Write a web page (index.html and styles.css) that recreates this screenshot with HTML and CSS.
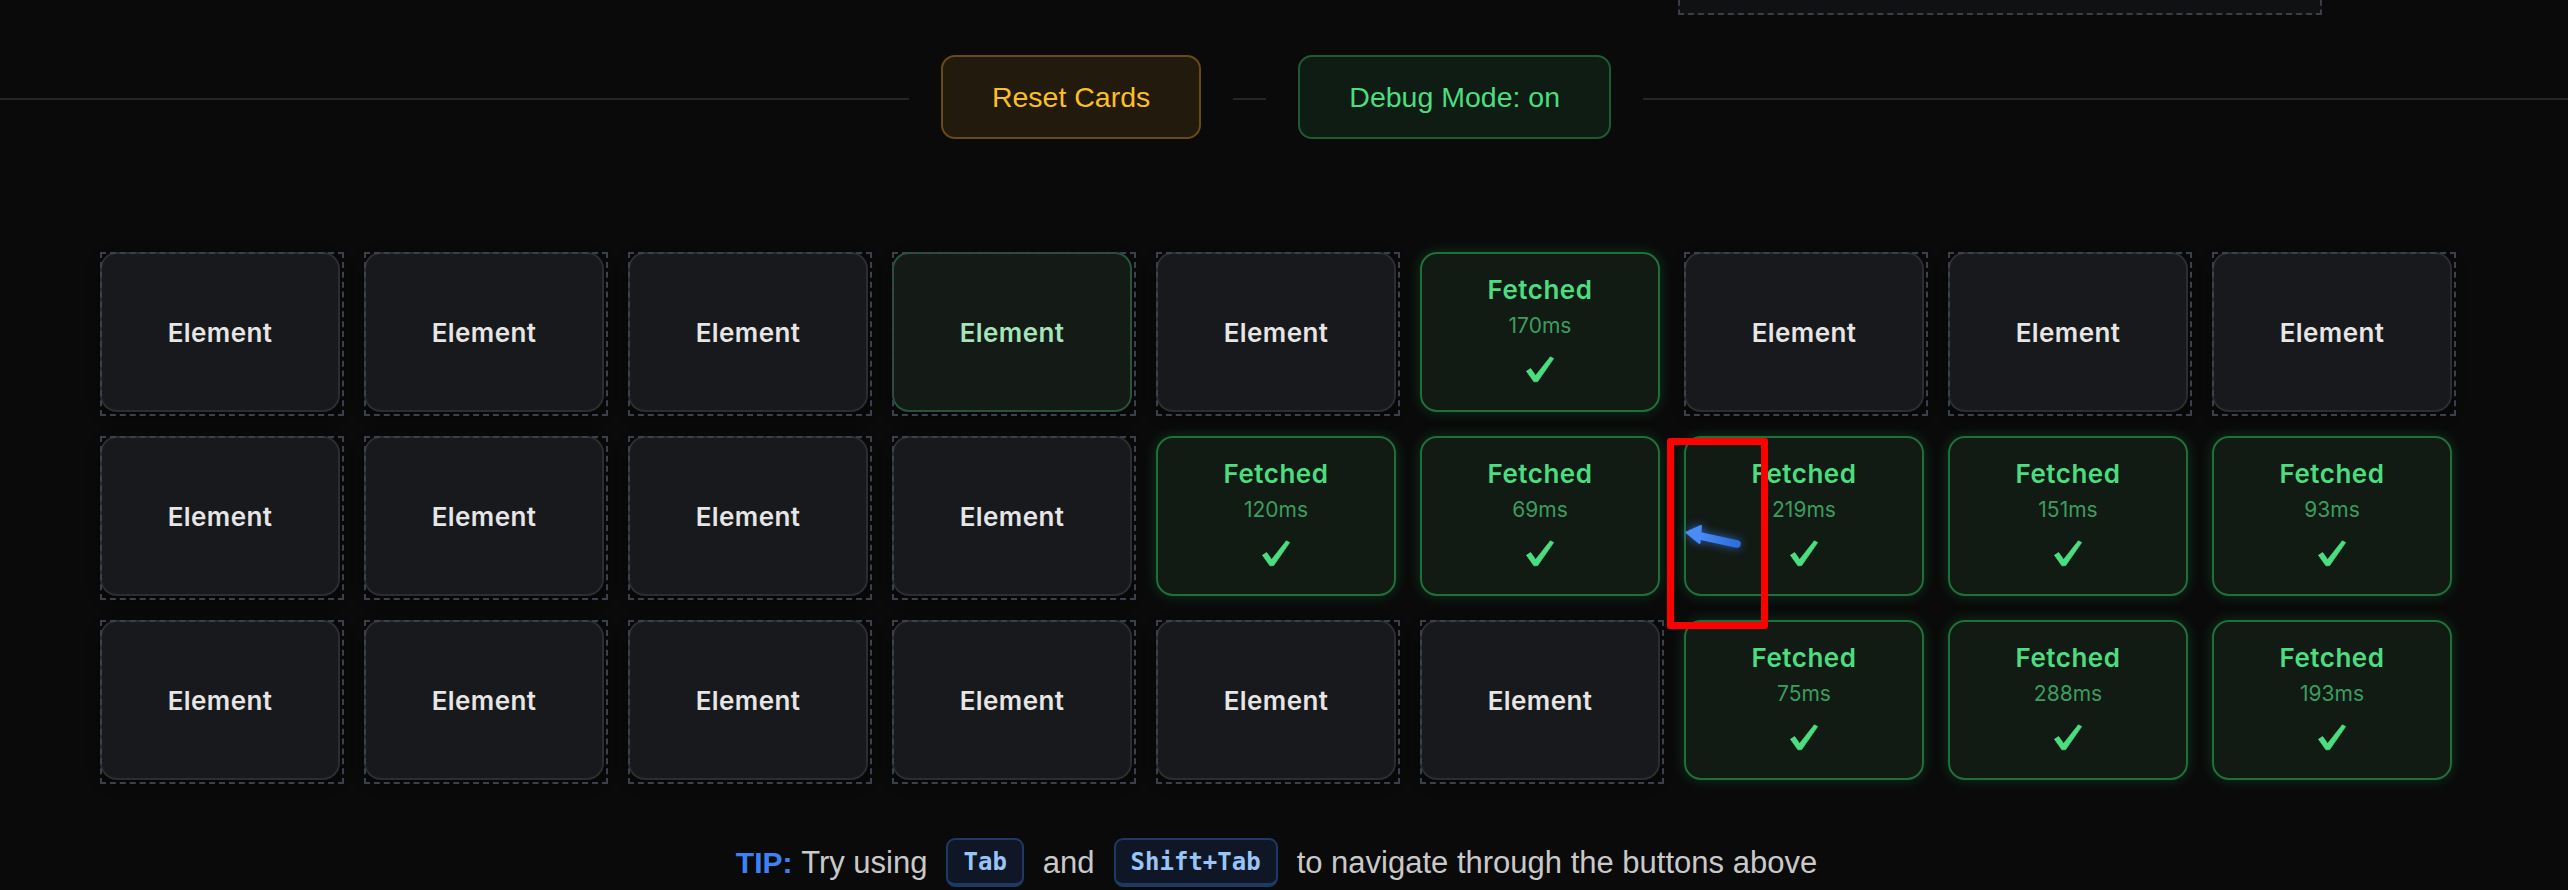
FILE: index.html
```html
<!DOCTYPE html>
<html lang="en">
<head>
<meta charset="utf-8">
<title>Cards</title>
<link rel="stylesheet" href="styles.css">
</head>
<body>
<div class="topbox"></div>

<div class="controls">
  <span class="btn-wrap"><button class="btn btn-reset">Reset Cards</button></span>
  <span class="btn-wrap"><button class="btn btn-debug">Debug Mode: on</button></span>
</div>

<div class="grid">
  <!-- row 1 -->
  <div class="cell debug"><div class="card">Element</div></div>
  <div class="cell debug"><div class="card">Element</div></div>
  <div class="cell debug"><div class="card">Element</div></div>
  <div class="cell debug"><div class="card hover">Element</div></div>
  <div class="cell debug"><div class="card">Element</div></div>
  <div class="cell"><div class="card fetched"><div class="f-title">Fetched</div><div class="f-time">170ms</div><svg class="check" viewBox="0 0 30 27"><path d="M1.5 15.2 L5.6 12.6 L10.6 19.6 L25.4 0.8 L28.6 2.6 L12.6 25.6 L9 25.8 Z"/></svg></div></div>
  <div class="cell debug"><div class="card">Element</div></div>
  <div class="cell debug"><div class="card">Element</div></div>
  <div class="cell debug"><div class="card">Element</div></div>
  <!-- row 2 -->
  <div class="cell debug"><div class="card">Element</div></div>
  <div class="cell debug"><div class="card">Element</div></div>
  <div class="cell debug"><div class="card">Element</div></div>
  <div class="cell debug"><div class="card">Element</div></div>
  <div class="cell"><div class="card fetched"><div class="f-title">Fetched</div><div class="f-time">120ms</div><svg class="check" viewBox="0 0 30 27"><path d="M1.5 15.2 L5.6 12.6 L10.6 19.6 L25.4 0.8 L28.6 2.6 L12.6 25.6 L9 25.8 Z"/></svg></div></div>
  <div class="cell"><div class="card fetched"><div class="f-title">Fetched</div><div class="f-time">69ms</div><svg class="check" viewBox="0 0 30 27"><path d="M1.5 15.2 L5.6 12.6 L10.6 19.6 L25.4 0.8 L28.6 2.6 L12.6 25.6 L9 25.8 Z"/></svg></div></div>
  <div class="cell"><div class="card fetched"><div class="f-title">Fetched</div><div class="f-time">219ms</div><svg class="check" viewBox="0 0 30 27"><path d="M1.5 15.2 L5.6 12.6 L10.6 19.6 L25.4 0.8 L28.6 2.6 L12.6 25.6 L9 25.8 Z"/></svg></div></div>
  <div class="cell"><div class="card fetched"><div class="f-title">Fetched</div><div class="f-time">151ms</div><svg class="check" viewBox="0 0 30 27"><path d="M1.5 15.2 L5.6 12.6 L10.6 19.6 L25.4 0.8 L28.6 2.6 L12.6 25.6 L9 25.8 Z"/></svg></div></div>
  <div class="cell"><div class="card fetched"><div class="f-title">Fetched</div><div class="f-time">93ms</div><svg class="check" viewBox="0 0 30 27"><path d="M1.5 15.2 L5.6 12.6 L10.6 19.6 L25.4 0.8 L28.6 2.6 L12.6 25.6 L9 25.8 Z"/></svg></div></div>
  <!-- row 3 -->
  <div class="cell debug"><div class="card">Element</div></div>
  <div class="cell debug"><div class="card">Element</div></div>
  <div class="cell debug"><div class="card">Element</div></div>
  <div class="cell debug"><div class="card">Element</div></div>
  <div class="cell debug"><div class="card">Element</div></div>
  <div class="cell debug"><div class="card">Element</div></div>
  <div class="cell"><div class="card fetched"><div class="f-title">Fetched</div><div class="f-time">75ms</div><svg class="check" viewBox="0 0 30 27"><path d="M1.5 15.2 L5.6 12.6 L10.6 19.6 L25.4 0.8 L28.6 2.6 L12.6 25.6 L9 25.8 Z"/></svg></div></div>
  <div class="cell"><div class="card fetched"><div class="f-title">Fetched</div><div class="f-time">288ms</div><svg class="check" viewBox="0 0 30 27"><path d="M1.5 15.2 L5.6 12.6 L10.6 19.6 L25.4 0.8 L28.6 2.6 L12.6 25.6 L9 25.8 Z"/></svg></div></div>
  <div class="cell"><div class="card fetched"><div class="f-title">Fetched</div><div class="f-time">193ms</div><svg class="check" viewBox="0 0 30 27"><path d="M1.5 15.2 L5.6 12.6 L10.6 19.6 L25.4 0.8 L28.6 2.6 L12.6 25.6 L9 25.8 Z"/></svg></div></div>
</div>

<div class="tip">
  <span class="tip-label">TIP:</span><span class="tip-text">&nbsp;Try using</span>
  <kbd class="key">Tab</kbd>
  <span class="tip-text">and</span>
  <kbd class="key">Shift+Tab</kbd>
  <span class="tip-text">to navigate through the buttons above</span>
</div>

<div class="annot-box"></div>
<svg class="cursor" viewBox="0 0 70 35" width="70" height="35">
  <defs>
    <linearGradient id="cg" x1="0" y1="0" x2="1" y2="0">
      <stop offset="0" stop-color="#4a8cf7"/>
      <stop offset="1" stop-color="#2d6ee0"/>
    </linearGradient>
  </defs>
  <line x1="18" y1="17.5" x2="57" y2="26" stroke="url(#cg)" stroke-width="7.5" stroke-linecap="round"/>
  <path d="M6.5 14.5 L21 8 L19.5 25 Z" fill="#4a8cf7" stroke="#4a8cf7" stroke-width="2" stroke-linejoin="round"/>
</svg>
</body>
</html>
```

FILE: styles.css
```css
html, body {
  margin: 0;
  padding: 0;
  background: #0a0a0a;
  overflow: hidden;
}

body {
  position: relative;
  width: 2568px;
  height: 890px;
  font-family: "Liberation Sans", Arial, sans-serif;
}

/* cut-off dashed block at the very top */
.topbox {
  margin-left: 1678px;
  width: 640px;
  height: 13px;
  box-sizing: content-box;
  background: #0f1113;
  border: 2px dashed #3a3f47;
  border-top: none;
}

/* controls row with divider line */
.controls {
  margin-top: 40px;
  height: 84px;
  display: flex;
  justify-content: center;
  gap: 33px;
  padding-right: 16px;
  background-image: linear-gradient(#262626, #262626);
  background-repeat: no-repeat;
  background-size: 100% 2px;
  background-position: 0 43px;
}

.btn-wrap {
  display: flex;
  padding: 0 32px;
  background: #0a0a0a;
}

.btn {
  height: 84px;
  box-sizing: border-box;
  padding: 0 49px;
  border-radius: 14px;
  border: 2px solid;
  font-family: "Liberation Sans", Arial, sans-serif;
  font-size: 28.5px;
  line-height: 1;
  cursor: pointer;
}

.btn-reset {
  background: #231a0e;
  border-color: #6a4818;
  color: #fbbf24;
}

.btn-debug {
  background: #0f1c13;
  border-color: #1f5a31;
  color: #4ade80;
}

/* card grid */
.grid {
  margin-top: 113px;
  display: grid;
  grid-template-columns: repeat(9, 244px);
  grid-auto-rows: 164px;
  gap: 20px;
  justify-content: center;
  padding-right: 12px;
}

.cell {
  position: relative;
  width: 244px;
  height: 164px;
}

.cell.debug::after {
  content: "";
  position: absolute;
  inset: 0;
  border: 2px dashed #3a414d;
  pointer-events: none;
}

.card {
  width: 240px;
  height: 160px;
  box-sizing: border-box;
  border-radius: 17px;
  border: 2px solid #2c2d31;
  background: #18191c;
  box-shadow: 0 4px 14px rgba(0, 0, 0, 0.45);
  display: flex;
  flex-direction: column;
  align-items: center;
  justify-content: center;
  font-family: Inter, "Noto Sans", sans-serif;
  font-weight: 600;
  font-size: 26px;
  letter-spacing: 0.4px;
  color: #e6e6e7;
}

.card.hover {
  background: #141b16;
  border-color: #25543a;
  color: #a6e4bb;
}

.card.fetched {
  justify-content: flex-start;
  padding-top: 21px;
  background: #121a14;
  border-color: #1f7038;
  box-shadow: 0 0 14px rgba(34, 197, 94, 0.22);
  letter-spacing: 0;
}

.f-title {
  font-size: 26px;
  font-weight: 600;
  line-height: 30px;
  letter-spacing: 0.5px;
  color: #4ade80;
}

.f-time {
  margin-top: 9px;
  font-size: 21px;
  font-weight: 400;
  line-height: 24px;
  color: #3c9d5f;
}

.check {
  margin-top: 18px;
  width: 30px;
  height: 27px;
  fill: #4ade80;
  stroke: #4ade80;
  stroke-width: 0.8;
  stroke-linejoin: round;
}

/* tip line */
.tip {
  margin-top: 54px;
  height: 49px;
  display: flex;
  align-items: center;
  justify-content: center;
  padding-right: 15px;
  font-family: "Liberation Sans", Arial, sans-serif;
  font-size: 31px;
  color: #c9c9c9;
  white-space: pre;
}

.tip-label {
  color: #3b82f6;
  font-weight: 700;
  font-size: 30px;
}

.key {
  height: 49px;
  box-sizing: border-box;
  margin: 0 19px;
  padding: 0 15px;
  display: flex;
  align-items: center;
  border: 2px solid #1f3a62;
  border-bottom-width: 4px;
  border-radius: 9px;
  background: #0f1726;
  font-family: "DejaVu Sans Mono", "Liberation Mono", monospace;
  font-weight: 700;
  font-size: 24px;
  color: #98c4f7;
}

/* annotation overlays */
.annot-box {
  position: absolute;
  left: 1667px;
  top: 438px;
  width: 101px;
  height: 191px;
  box-sizing: border-box;
  border: 7px solid #ff0000;
  border-radius: 3px;
  pointer-events: none;
}

.cursor {
  position: absolute;
  left: 1680px;
  top: 518px;
  filter: drop-shadow(0 0 5px rgba(59, 130, 246, 0.7));
  pointer-events: none;
}
```
